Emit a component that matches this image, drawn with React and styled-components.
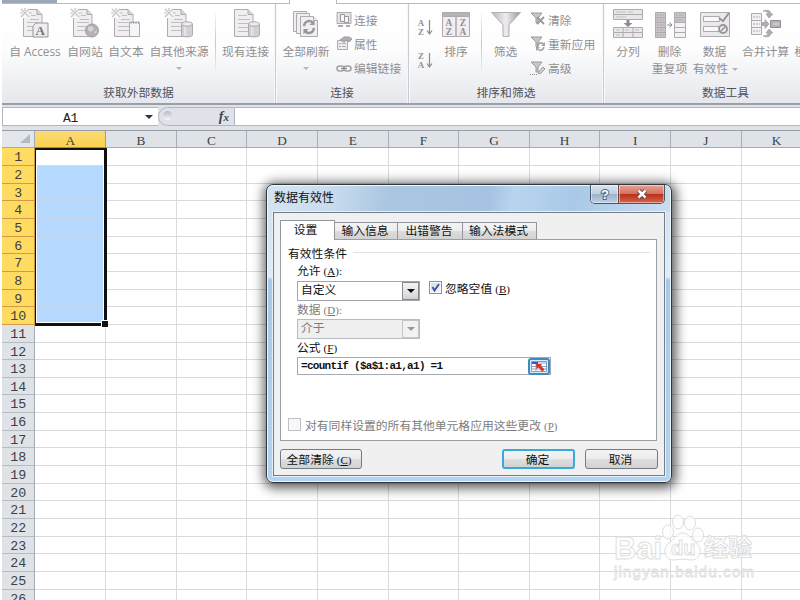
import React from 'react';
import styled, { createGlobalStyle, css } from 'styled-components';

const GlobalStyle = createGlobalStyle`
  * {
    box-sizing: border-box;
  }
  body {
    margin: 0;
    overflow: hidden;
    background: #fff;
    font-family: 'Noto Sans CJK SC', sans-serif;
    font-size: 11.8px;
  }
  svg {
    display: block;
    flex: none;
    overflow: visible;
  }
`;

const Window = styled.div`
  position: relative;
  width: 800px;
  height: 600px;
  padding-left: 2px;
  overflow: hidden;
  display: flex;
  flex-direction: column;
`;

/* ribbon */

const TabStrip = styled.div`
  display: flex;
  flex: none;
  height: 4px;
`;

const TabEdge = styled.div`
  width: ${({ width }) => (width ? `${width}px` : 'auto')};
  flex: ${({ width }) => (width ? 'none' : 1)};
  background: ${({ file }) => (file ? '#9ca7b9' : '#fff')};
  border-bottom: ${({ active }) => (active ? 'none' : '1px solid #b5bac6')};
  border-right: ${({ edge }) => (edge ? '1px solid #b5bac6' : 'none')};
`;

const Ribbon = styled.div`
  display: flex;
  flex: none;
  height: 101px;
  background: linear-gradient(#fff 0%, #fdfdfe 45%, #e9ebef 90%, #e4e7ec 100%);
  border-bottom: 2px solid #999fa9;
`;

const Group = styled.div`
  width: ${({ width }) => width}px;
  flex: none;
  display: flex;
  flex-direction: column;
  border-right: 1px solid #c9ccd4;
  box-shadow: inset -1px 0 #f6f7f9, 1px 0 #fafafb;
`;

const Tools = styled.div`
  display: flex;
  height: 78px;
  padding-left: ${({ left }) => left || 0}px;
`;

const GroupName = styled.div`
  line-height: 20px;
  text-align: center;
  color: #50525b;
`;

const BigButton = styled.div`
  width: ${({ width }) => width}px;
  flex: none;
  display: flex;
  flex-direction: column;
  align-items: center;
  padding-top: 4px;
  color: #8f8f92;
  white-space: nowrap;
  line-height: 17px;
  font-family: 'Open Sans', 'Noto Sans CJK SC', sans-serif;
  svg {
    margin-bottom: 5px;
  }
`;

const Arrow = styled.i`
  display: inline-block;
  border: ${({ size }) => size || 3}px solid transparent;
  border-top-color: ${({ color }) => color || '#b5b5b9'};
  border-bottom: 0;
  margin: ${({ margin }) => margin || 0};
`;

const Divider = styled.div`
  width: 1px;
  height: 58px;
  margin: 10px ${({ right }) => right}px 0 ${({ left }) => left}px;
  background: linear-gradient(#f4f4f6, #c5c8cf 50%, #eceef1);
`;

const SmallColumn = styled.div`
  display: flex;
  flex-direction: column;
  padding-top: 3px;
  margin-left: ${({ left }) => left || 0}px;
`;

const SmallButton = styled.div`
  display: flex;
  align-items: center;
  gap: 2px;
  height: 24.3px;
  color: #8f8f92;
  white-space: nowrap;
`;

const SortColumn = styled.div`
  width: 21px;
  display: flex;
  flex-direction: column;
  gap: 16px;
  padding-top: 15px;
`;

/* formula bar */

const FormulaBar = styled.div`
  display: flex;
  flex: none;
  height: 25px;
  padding: 2px 0 4px;
  background: #dfe3e9;
`;

const NameBox = styled.div`
  width: 156px;
  display: flex;
  align-items: center;
  padding: 3px 0 0 60px;
  border: 1px solid #b2b6bf;
  border-width: 1px 0 1px 1px;
  background: #fff;
  font: 13px 'Liberation Mono', monospace;
  letter-spacing: -0.4px;
  color: #222;
`;

const FunctionBox = styled.div`
  width: 77px;
  display: flex;
  justify-content: space-between;
  align-items: center;
  padding: 0 5px 0 4px;
  background: #dfe3e9;
  border: 1px solid #b2b6bf;
  border-radius: 10px 0 0 10px;
  font: italic bold 14px/17px 'Liberation Serif', serif;
  color: #444;
  small {
    font-size: 11px;
  }
`;

const Knob = styled.div`
  width: 9px;
  height: 9px;
  margin-bottom: 2px;
  border-radius: 50%;
  background: linear-gradient(#b7bac1, #f5f6f8);
`;

const FormulaInput = styled.div`
  flex: 1;
  background: #fff;
  border: 1px solid #b2b6bf;
  border-width: 1px 0;
`;

/* sheet */

const HeaderRow = styled.div`
  display: flex;
  flex: none;
  height: 18.3px;
  margin-right: -20px;
  border-top: 1px solid #989da6;
`;

const headerFont = css`
  font-family: 'Liberation Mono', monospace;
  font-size: 13.3px;
  color: #3c3f45;
`;

const Corner = styled.div`
  width: 33.4px;
  flex: none;
  display: flex;
  justify-content: flex-end;
  align-items: flex-end;
  padding: 0 4px 4px 0;
  background: #e3e6eb;
  border-right: 1px solid #a5aab3;
  border-bottom: 1px solid #a5aab3;
`;

const ColumnHeader = styled.div`
  ${headerFont}
  font-family: 'Liberation Serif', serif;
  width: 70.63px;
  flex: none;
  line-height: 20px;
  text-align: center;
  background: ${({ selected }) => (selected ? 'linear-gradient(#fbdc78, #fbd04b)' : '#dfe3e8')};
  border-right: 1px solid ${({ selected }) => (selected ? '#c9983c' : '#a9adb5')};
  border-bottom: 1px solid ${({ selected }) => (selected ? '#b38b2d' : '#a5aab3')};
`;

const Row = styled.div`
  display: flex;
  flex: none;
  height: 17.66px;
  margin-right: -20px;
`;

const RowHeader = styled.div`
  ${headerFont}
  width: 33.4px;
  flex: none;
  line-height: 20px;
  text-align: center;
  background: ${({ selected }) => (selected ? '#ffdc61' : '#dfe3e8')};
  border-right: 1px solid ${({ selected }) => (selected ? '#c9983c' : '#a5aab3')};
  border-bottom: 1px solid ${({ selected }) => (selected ? '#d39b45' : '#b6bac1')};
`;

const Cell = styled.div`
  width: 70.63px;
  flex: none;
  background: ${({ selected }) => (selected ? '#b5d9ff' : '#fff')};
  border-right: 1px solid #d9dadd;
  border-bottom: 1px solid ${({ selected }) => (selected ? '#c4d4e6' : '#d9dadd')};
`;

const Selection = styled.div`
  position: absolute;
  left: 35px;
  top: 148px;
  width: 72px;
  height: 178px;
  border: 2px solid #111;
  border-width: 2px 3px 3px 1px;
  box-shadow: inset 0 0 0 1px #fff;
  &::after {
    content: '';
    position: absolute;
    right: -4px;
    bottom: -4px;
    width: 6px;
    height: 6px;
    background: #111;
    border: 1px solid #fff;
    border-width: 1px 0 0 1px;
  }
`;

const Watermark = styled.svg`
  position: absolute;
  left: 608px;
  top: 510px;
  fill: #fff;
  fill-opacity: 0.75;
  stroke: #dedede;
`;

/* dialog */

const Dialog = styled.div`
  position: absolute;
  left: 266px;
  top: 184px;
  width: 406px;
  height: 299px;
  display: flex;
  flex-direction: column;
  padding: 0 6px 6px;
  border: 1px solid #32373d;
  border-radius: 7px;
  background: linear-gradient(
    #b5cfe9 0,
    #d3e3f3 28px,
    #dfebf7 92px,
    #a6c8e9 95px,
    #b4d3f1 100%
  );
  box-shadow: inset 0 0 0 1px #eef6fd, 1px 2px 12px 3px rgba(0, 0, 0, 0.65);
  font-family: 'Liberation Serif', 'Noto Sans CJK SC', serif;
  color: #111;
`;

const TitleBar = styled.div`
  display: flex;
  flex: none;
  justify-content: space-between;
  height: 27px;
  margin: 0 -5px;
  padding: 0 5px 0 6px;
  border-radius: 6px 6px 0 0;
  background: linear-gradient(
    100deg,
    #d5e4f2 0%,
    #c9dced 16%,
    #abc6e1 30%,
    #a5c3e1 55%,
    #b9d4ef 61%,
    #a9c9e7 76%,
    #c9ddef 100%
  );
  border-top: 1px solid #f0f7fd;
`;

const Title = styled.div`
  line-height: 24px;
  font-size: 12px;
  color: #111;
`;

const Controls = styled.div`
  display: flex;
  width: 75px;
  height: 19px;
  margin-top: -1px;
  border: 1px solid #4a5665;
  border-top: 0;
  border-radius: 0 0 5px 5px;
  overflow: hidden;
`;

const Control = styled.div`
  width: ${({ close }) => (close ? 46 : 27)}px;
  display: flex;
  align-items: center;
  justify-content: center;
  border-left: ${({ close }) => (close ? '1px solid #6b4447' : 'none')};
  background: ${({ close }) =>
    close
      ? 'linear-gradient(#e6a496 0, #d4705e 48%, #b9301b 52%, #d4674e 100%)'
      : 'linear-gradient(#d9e4ef 0, #bfd0e2 48%, #9db2ca 52%, #bdd2e8 100%)'};
  box-shadow: inset 0 0 0 1px rgba(255, 255, 255, 0.45);
`;

const Client = styled.div`
  flex: 1;
  display: flex;
  flex-direction: column;
  padding: 7px 7px 0 6px;
  border: 1px solid #717d8a;
  outline: 1px solid #e4f0fb;
  background: #f0f0f0;
`;

const Tabs = styled.div`
  display: flex;
  align-items: flex-end;
  height: 19px;
`;

const Tab = styled.div`
  width: ${({ width }) => width}px;
  height: ${({ active }) => (active ? 20 : 17)}px;
  margin-bottom: ${({ active }) => (active ? -1 : 0)}px;
  padding-right: ${({ active }) => (active ? 4 : 2)}px;
  line-height: ${({ active }) => (active ? 19 : 17)}px;
  text-align: center;
  border: 1px solid #93969c;
  border-bottom: 0;
  border-left-width: ${({ active }) => (active ? 1 : 0)}px;
  background: ${({ active }) =>
    active ? '#fff' : 'linear-gradient(#f4f4f4 0, #ececec 50%, #dcdcdc 52%, #d2d2d2 100%)'};
  z-index: 1;
  white-space: nowrap;
`;

const Panel = styled.div`
  height: 202px;
  padding: 4px 6px 0 7px;
  background: #fff;
  border: 1px solid #9a9ea6;
`;

const Legend = styled.div`
  display: flex;
  align-items: center;
  gap: 6px;
  height: 17px;
  margin-bottom: 1px;
  &::after {
    content: '';
    flex: 1;
    border-top: 1px solid #dbe3ea;
  }
`;

const Label = styled.div`
  height: ${({ height }) => height || 18}px;
  line-height: 18px;
  padding-left: 9px;
  color: ${({ disabled }) => (disabled ? '#7c7c7c' : '#111')};
`;

/* access key after a caption, e.g. (A) */
const Key = styled.span`
  margin-left: 3px;
  font-size: 11px;
`;

const FieldLine = styled.div`
  display: flex;
  align-items: center;
  height: 20px;
  padding-left: 9px;
`;

const Combo = styled.div`
  display: flex;
  justify-content: space-between;
  align-items: center;
  width: 123px;
  height: 20px;
  padding-left: 3px;
  line-height: 16px;
  border: 1px solid ${({ disabled }) => (disabled ? '#b9bbc0' : '#a2a6ae')};
  background: ${({ disabled }) => (disabled ? '#efefef' : '#fff')};
  color: ${({ disabled }) => (disabled ? '#7c7c7c' : '#111')};
`;

const ComboText = styled.span`
  margin-bottom: 2px;
`;

const ComboButton = styled.div`
  display: flex;
  align-items: center;
  justify-content: center;
  width: 17px;
  height: 18px;
  border: 1px solid ${({ disabled }) => (disabled ? '#c3c5c9' : '#85888e')};
  background: ${({ disabled }) =>
    disabled ? '#f2f2f2' : 'linear-gradient(#f4f4f4, #e6e6e6 50%, #d2d2d2)'};
`;

const Check = styled.div`
  display: flex;
  align-items: center;
  gap: ${({ gap }) => gap || 4}px;
  height: 17px;
  margin-top: ${({ top }) => top || 0}px;
  margin-left: ${({ left }) => left || 0}px;
  color: ${({ disabled }) => (disabled ? '#7c7c7c' : '#111')};
  white-space: nowrap;
`;

const Box = styled.div`
  width: 13px;
  height: 13px;
  border: 1px solid ${({ disabled }) => (disabled ? '#bdbfc3' : '#8d9299')};
  background: ${({ disabled }) =>
    disabled ? '#f7f7f7' : 'linear-gradient(135deg, #cfd8e2, #f5f8fb)'};
  box-shadow: inset 0 0 0 1px #fafafa;
`;

const FormulaField = styled.div`
  display: flex;
  align-items: center;
  width: 254px;
  height: 18px;
  margin-top: -2px;
  padding-left: 3px;
  border: 1px solid #a5a9b1;
  font-family: 'Liberation Mono', 'Noto Sans CJK SC', monospace;
  font-size: 11px;
  font-weight: bold;
  letter-spacing: -0.7px;
  white-space: pre;
`;

const Wide = styled.span`
  width: 11.7px;
  text-align: ${({ align }) => align};
`;

const RefButton = styled.div`
  display: flex;
  align-items: center;
  justify-content: center;
  width: 22px;
  height: 17px;
  margin-left: auto;
  border: 2px solid #4189bd;
  border-radius: 3px;
  background: #dfebf4;
`;

const Footer = styled.div`
  display: flex;
  gap: 10px;
  padding-top: 8px;
  margin-right: -1px;
`;

const Button = styled.div`
  width: ${({ width }) => width}px;
  height: 20px;
  line-height: ${({ primary }) => (primary ? 18 : 20)}px;
  padding-right: 2px;
  text-align: center;
  border: ${({ primary }) => (primary ? '2px solid #39a9d9' : '1px solid #777a80')};
  border-radius: 3px;
  background: linear-gradient(#f3f3f3 0, #ececec 48%, #dedede 52%, #d2d2d2 100%);
  &:first-child {
    margin-right: auto;
    padding-right: 4px;
  }
`;

const ink = '#aeaaaf';
const pale = '#f0eef1';

const Page = ({ star = true }) => (
  <g stroke={ink} fill="none">
    <path d="M3.5 1.5H17l5 5V28.5H3.5z" fill={pale} />
    <path d="M17 1.5v5h5" fill="#d8d5da" />
    <path
      d={star ? 'M11 7.5h5M10 11.5h9M7 14.5h12M7 18.5h12M7 22.5h12' : 'M7 7.5h9M7 11.5h12M7 15.5h12M7 19.5h12M7 23.5h12'}
      stroke="#c2bec4"
    />
    {star && (
      <>
        <path d="M0 0h9v10H0z" fill="#fbfafb" stroke="none" />
        <path d="M1 1l8 8M1 9l8-8M5 0v3M0 5h3M8 5h4" stroke="#c7c3c8" strokeWidth="1.2" />
      </>
    )}
  </g>
);

const Cylinder = () => (
  <g fill="#d3d0d5" stroke={ink}>
    <path d="M17.5 16v11c0 2.5 11 2.5 11 0V16" />
    <ellipse cx="23" cy="16" rx="5.5" ry="2.2" fill="#eeecef" />
    <path d="M20.5 19v9M22 19v9" stroke="#e9e7ea" />
  </g>
);

const Icon = ({ children, width = 30, height = 30, ...rest }) => (
  <svg width={width} height={height} viewBox={`0 0 ${width} ${height}`} fill="none" {...rest}>
    {children}
  </svg>
);

const AccessIcon = () => (
  <Icon>
    <Page />
    <path d="M16 15h12v14H13V18z" fill="#eeecef" stroke="#99949a" />
    <text x="15.5" y="27" fontSize="13" fontWeight="bold" fontFamily="Liberation Serif" fill="#777379">
      A
    </text>
  </Icon>
);

const WebIcon = () => (
  <Icon>
    <Page />
    <circle cx="22" cy="22.5" r="6.5" fill="#b5b1b7" stroke="#a19da3" />
    <path d="M18 19l4-1 2 3-3 3-3-2zM24 24l3-2-1 4z" fill="#d6d3d8" />
  </Icon>
);

const TextIcon = () => (
  <Icon>
    <Page />
    <path d="M18.5 14.5h10v14h-10z" fill="#f6f5f7" stroke={ink} />
    <path d="M20 13v3M22.5 13v3M25 13v3M27.5 13v3" stroke={ink} />
  </Icon>
);

const SourceIcon = () => (
  <Icon>
    <Page />
    <Cylinder />
  </Icon>
);

const ConnectionIcon = () => (
  <Icon>
    <Page star={false} />
    <Cylinder />
  </Icon>
);

const RefreshIcon = () => (
  <Icon>
    <g stroke={ink} fill={pale}>
      <path d="M2.5 3.5h13v20h-13z" />
      <path d="M5.5 5.5h13v20h-13z" />
      <path d="M9.5 8.5h13l4 4v16h-17z" />
      <path d="M22.5 8.5v4h4" />
    </g>
    <path d="M13 18c1-6 7-6 9-3M23 20c-1 6-7 6-9 3" stroke="#9a959c" strokeWidth="2.4" />
    <path d="M23.5 12v5h-5zM12.5 26v-5h5z" fill="#9a959c" />
  </Icon>
);

const LinkPageIcon = () => (
  <Icon width={16} height={16}>
    <path d="M1 1.5h14v11H1z" fill="#e3e1e5" stroke={ink} />
    <path d="M4.5 3.5h4v7h-4zM8.5 5.5h4v6h-4z" fill="#f7f6f8" stroke="#99959b" />
    <path d="M2 15h5M10 15h4" stroke={ink} strokeWidth="2" />
  </Icon>
);

const PropertyIcon = () => (
  <Icon width={16} height={16}>
    <path d="M1.5 5.5h10v9h-10z" fill="#eeecef" stroke={ink} />
    <path d="M3 8.5h2M6 8.5h4M3 11.5h2M6 11.5h4" stroke={ink} />
    <path d="M4 5l4-3h5l3 2-3 3-2-2-3 2z" fill="#b3afb5" stroke="#9c989e" />
  </Icon>
);

const ChainIcon = () => (
  <Icon width={16} height={16}>
    <rect x="1" y="6" width="7" height="5" rx="2.5" stroke="#a5a1a7" strokeWidth="1.6" />
    <rect x="8" y="6" width="7" height="5" rx="2.5" stroke="#a5a1a7" strokeWidth="1.6" />
    <path d="M5 8.5h6" stroke="#8d898f" strokeWidth="1.3" />
  </Icon>
);

const SortLetters = ({ x, first, second, size = 9.5, gap = 9 }) => (
  <g fontFamily="Liberation Serif" fontSize={size} fontWeight="bold" fill="#928e94" textAnchor="middle">
    <text x={x} y="7">
      {first}
    </text>
    <text x={x} y={7 + gap}>
      {second}
    </text>
  </g>
);

const SortIcon = ({ first, second }) => (
  <Icon width={16} height={17}>
    <SortLetters x={4} first={first} second={second} size={8.8} />
    <path d="M12.5 1v14M10 11.5l2.5 3.5 2.5-3.5" stroke="#8d898f" strokeWidth="1.2" />
  </Icon>
);

const SortDialogIcon = () => (
  <Icon>
    <path d="M1.5 4.5h27v24h-27z" fill={pale} stroke={ink} />
    <path d="M1.5 4.5h27v4h-27z" fill="#b7b3b9" stroke={ink} />
    <path d="M15 9v19" stroke={ink} strokeWidth="1.5" />
    <g transform="translate(0 10.5)">
      <SortLetters x={8} first="A" second="Z" size={9.4} gap={9.5} />
      <SortLetters x={22} first="Z" second="A" size={9.4} gap={9.5} />
    </g>
  </Icon>
);

const FilterIcon = () => (
  <Icon>
    <defs>
      <linearGradient id="funnel">
        <stop offset="0" stopColor="#b9b5bb" />
        <stop offset="0.5" stopColor="#efedf0" />
        <stop offset="1" stopColor="#989399" />
      </linearGradient>
    </defs>
    <path d="M.5 4.5h29L18 17v11.500h-6V17z" fill="url(#funnel)" stroke="#b4b0b5" />
  </Icon>
);

const Funnel = () => <path d="M1 2h11L8 7v5H6V7z" fill="#c9c5cb" stroke="#9c989e" />;

const ClearIcon = () => (
  <Icon width={16} height={16}>
    <Funnel />
    <path d="M7 6l7 7M14 6l-7 7" stroke="#9c989e" strokeWidth="1.8" />
  </Icon>
);

const ReapplyIcon = () => (
  <Icon width={16} height={16}>
    <Funnel />
    <path d="M8 11c0-4 5-4 6-1M14 12c-1 4-5 4-6 2" stroke="#a5a1a7" strokeWidth="1.6" />
    <path d="M15 7v4h-4zM6 16v-4h4z" fill="#a5a1a7" />
  </Icon>
);

const AdvancedIcon = () => (
  <Icon width={16} height={16}>
    <Funnel />
    <path d="M8 13l5-6 2 2-5 5z" fill="#d5d2d7" stroke="#9c989e" />
    <path d="M0 14.5h8" stroke="#8f8b91" strokeDasharray="1 1" />
  </Icon>
);

const SplitIcon = () => (
  <Icon>
    <g stroke={ink} fill="#e9e7ea">
      <path d="M.5 1.5h29v10H.5z" />
      <path d="M.5 6.5h29" />
      <path d="M.5 19.5h29v10H.5zM.5 24.5h29M10 19.5v10M20 19.5v10" />
    </g>
    <path d="M3 4h10M15 4h5M3 9h10M3 22h4M12 22h4M22 22h4M3 27h4" stroke="#c2bec4" />
    <path d="M13.5 12h3v3h3l-4.5 4-4.5-4h3z" fill="#8e8990" />
  </Icon>
);

const DuplicatesIcon = () => (
  <Icon width={32}>
    <g stroke={ink} fill="#c8c4ca">
      <path d="M1.5 4.5h10v25h-10z" />
      <path d="M20.5 4.5h11v25h-11z" fill="#f3f2f4" />
      <path d="M20.5 4.5h11v10h-11z" />
      <path d="M1.5 9.5h10M1.5 14.5h10M1.5 19.5h10M1.5 24.5h10M20.5 9.5h11M20.5 19.5h11M20.5 24.5h11" />
    </g>
    <path d="M3 7h7M3 12h7M3 17h7M3 22h7M3 27h7M22 7h7M22 12h7" stroke="#a8a4aa" strokeDasharray="2 1" />
    <path d="M13 17h5M15.5 14.5L18 17l-2.5 2.5" stroke="#8e8990" />
  </Icon>
);

const ValidationIcon = () => (
  <Icon>
    <path d="M.5 4.5h29v24H.5z" fill="#ebe9ec" stroke={ink} />
    <path d="M3.5 8.5h16v5h-16zM3.5 18.5h16v5h-16z" fill="#f9f8fa" stroke={ink} />
    <path d="M19 10l4 3 6-8" stroke="#99949b" strokeWidth="2" />
    <circle cx="23" cy="21" r="4" stroke="#99949b" strokeWidth="1.8" />
    <path d="M20 24l6-6" stroke="#99949b" strokeWidth="1.6" />
  </Icon>
);

const ConsolidateIcon = () => (
  <Icon>
    <path d="M.5 5.5h10v21H.5zM.5 12.5h10M.5 19.5h10" fill="#f2f0f3" stroke={ink} />
    <path d="M2 9h7M2 16h7M2 23h7" stroke="#aaa6ac" strokeDasharray="2 1" />
    <path d="M19.5 12.5h10v7h-10z" fill="#b7b3b9" stroke="#918d93" />
    <path d="M22 16h6" stroke="#e2e0e4" />
    <path
      d="M11 14.5h3v-3l4 4.5-4 4.5v-3h-3zM12 3c5-2 8 0 8 3h2l-4 4-3-4h2c0-2-2-3-5-3zM12 28c5 2 8 0 8-3h2l-4-4-3 4h2c0 2-2 3-5 3z"
      fill="#b0acb2"
      stroke="#a19da3"
      strokeWidth=".7"
    />
  </Icon>
);

const RangeIcon = () => (
  <Icon width={16} height={11}>
    <path d="M.5.5h15v10H.5z" fill="#fff" stroke="#7a9cd1" />
    <path d="M1 1h6v2H1z" fill="#2f5ec4" />
    <path d="M7 2h8M0 5.5h15M0 8h15M5 3v8M10 3v8" stroke="#86a3d0" />
    <path d="M5 3h6L9.5 4.5l4 4-2 2-4-4L5.5 8z" fill="#d23420" />
  </Icon>
);

const columns = ['A', 'B', 'C', 'D', 'E', 'F', 'G', 'H', 'I', 'J', 'K'];
const rows = Array.from({ length: 26 }, (_, i) => i + 1);

const RibbonBar = () => (
  <>
    <TabStrip>
      <TabEdge width={55} file />
      <TabEdge width={233} edge />
      <TabEdge width={47} active edge />
      <TabEdge />
    </TabStrip>
    <Ribbon>
      <Group width={274}>
        <Tools left={3}>
          <BigButton width={60}>
            <AccessIcon />自 Access
          </BigButton>
          <BigButton width={40}>
            <WebIcon />
            自网站
          </BigButton>
          <BigButton width={42}>
            <TextIcon />
            自文本
          </BigButton>
          <BigButton width={64}>
            <SourceIcon />
            自其他来源
            <Arrow margin="7px 0 0" />
          </BigButton>
          <Divider left={4} right={2} />
          <BigButton width={55}>
            <ConnectionIcon />
            现有连接
          </BigButton>
        </Tools>
        <GroupName>获取外部数据</GroupName>
      </Group>
      <Group width={133}>
        <Tools>
          <BigButton width={60}>
            <RefreshIcon />
            全部刷新
            <Arrow margin="7px 0 0" />
          </BigButton>
          <SmallColumn>
            <SmallButton>
              <LinkPageIcon />
              连接
            </SmallButton>
            <SmallButton>
              <PropertyIcon />
              属性
            </SmallButton>
            <SmallButton>
              <ChainIcon />
              编辑链接
            </SmallButton>
          </SmallColumn>
        </Tools>
        <GroupName>连接</GroupName>
      </Group>
      <Group width={195}>
        <Tools left={8}>
          <SortColumn>
            <SortIcon first="A" second="Z" />
            <SortIcon first="Z" second="A" />
          </SortColumn>
          <BigButton width={36}>
            <SortDialogIcon />
            排序
          </BigButton>
          <Divider left={7} right={5} />
          <BigButton width={37}>
            <FilterIcon />
            筛选
          </BigButton>
          <SmallColumn left={6}>
            <SmallButton>
              <ClearIcon />
              清除
            </SmallButton>
            <SmallButton>
              <ReapplyIcon />
              重新应用
            </SmallButton>
            <SmallButton>
              <AdvancedIcon />
              高级
            </SmallButton>
          </SmallColumn>
        </Tools>
        <GroupName>排序和筛选</GroupName>
      </Group>
      <Group width={244}>
        <Tools left={4}>
          <BigButton width={40}>
            <SplitIcon />
            分列
          </BigButton>
          <BigButton width={43}>
            <DuplicatesIcon />
            <span>删除</span>
            <span>重复项</span>
          </BigButton>
          <BigButton width={47}>
            <ValidationIcon />
            <span>数据</span>
            <span>
              有效性
              <Arrow margin="0 -2px 2px 4px" />
            </span>
          </BigButton>
          <BigButton width={55}>
            <ConsolidateIcon />
            合并计算
          </BigButton>
          <BigButton width={50}>
            <Icon />
            模拟分析
          </BigButton>
        </Tools>
        <GroupName>数据工具</GroupName>
      </Group>
    </Ribbon>
  </>
);

const Sheet = () => (
  <>
    <HeaderRow>
      <Corner>
        <Icon width={10} height={9}>
          <path d="M10 0v9H0z" fill="#b5b9c0" />
        </Icon>
      </Corner>
      {columns.map((name) => (
        <ColumnHeader key={name} selected={name === 'A'}>
          {name}
        </ColumnHeader>
      ))}
    </HeaderRow>
    {rows.map((row) => (
      <Row key={row}>
        <RowHeader selected={row <= 10}>{row}</RowHeader>
        {columns.map((name) => (
          <Cell key={name} selected={name === 'A' && row > 1 && row <= 10} />
        ))}
      </Row>
    ))}
    <Selection />
  </>
);

const ValidationDialog = () => (
  <Dialog>
    <TitleBar>
      <Title>数据有效性</Title>
      <Controls>
        <Control>
          <Icon width={12} height={14}>
            <text
              x="2"
              y="12"
              fontFamily="Liberation Sans"
              fontWeight="bold"
              fontSize="13"
              fill="#fff"
              stroke="#5a6675"
              strokeWidth="2"
              paintOrder="stroke"
            >
              ?
            </text>
          </Icon>
        </Control>
        <Control close>
          <Icon width={12} height={10}>
            <path d="M2.5 1.5l7 7M9.5 1.5l-7 7" stroke="#584048" strokeWidth="4.5" />
            <path d="M2.5 1.5l7 7M9.5 1.5l-7 7" stroke="#fff" strokeWidth="2.5" />
          </Icon>
        </Control>
      </Controls>
    </TitleBar>
    <Client>
      <Tabs>
        <Tab width={55} active>
          设置
        </Tab>
        <Tab width={63}>输入信息</Tab>
        <Tab width={65}>出错警告</Tab>
        <Tab width={74}>输入法模式</Tab>
      </Tabs>
      <Panel>
        <Legend>有效性条件</Legend>
        <Label height={19}>
          允许
          <Key>
            (<u>A</u>):
          </Key>
        </Label>
        <FieldLine>
          <Combo>
            <ComboText>自定义</ComboText>
            <ComboButton>
              <Arrow color="#111" size={4} />
            </ComboButton>
          </Combo>
          <Check left={9} top={-7} gap={3}>
            <Box>
              <Icon width={11} height={11}>
                <path d="M2.5 5l2 3.5L9 2" stroke="#3b4f9e" strokeWidth="1.8" />
              </Icon>
            </Box>
            <span>
              忽略空值
              <Key>
                (<u>B</u>)
              </Key>
            </span>
          </Check>
        </FieldLine>
        <Label disabled>
          数据
          <Key>
            (<u>D</u>):
          </Key>
        </Label>
        <FieldLine>
          <Combo disabled>
            <ComboText>介于</ComboText>
            <ComboButton disabled>
              <Arrow color="#999" size={4} />
            </ComboButton>
          </Combo>
        </FieldLine>
        <Label>
          公式
          <Key>
            (<u>F</u>)
          </Key>
        </Label>
        <FieldLine>
          <FormulaField>
            =countif<Wide align="right">(</Wide>$a$1:a1,a1<Wide align="left">)</Wide>=1
            <RefButton>
              <RangeIcon />
            </RefButton>
          </FormulaField>
        </FieldLine>
        <Check disabled top={39}>
          <Box disabled />
          <span>
            对有同样设置的所有其他单元格应用这些更改
            <Key>
              (<u>P</u>)
            </Key>
          </span>
        </Check>
      </Panel>
      <Footer>
        <Button width={82}>
          全部清除
          <Key>
            (<u>C</u>)
          </Key>
        </Button>
        <Button width={73} primary>
          确定
        </Button>
        <Button width={73}>取消</Button>
      </Footer>
    </Client>
  </Dialog>
);

const App = () => (
  <Window>
    <GlobalStyle />
    <RibbonBar />
    <FormulaBar>
      <NameBox>
        A1
        <Arrow color="#333" size={4} margin="0 0 3px 67px" />
      </NameBox>
      <FunctionBox>
        <Knob />
        <span>
          f<small>x</small>
        </span>
      </FunctionBox>
      <FormulaInput />
    </FormulaBar>
    <Sheet />
    <Watermark width="160" height="80" fontFamily="Liberation Sans" fontWeight="bold">
      <text x="6" y="49" fontSize="32" textLength="48" lengthAdjust="spacingAndGlyphs">
        Bai
      </text>
      <ellipse cx="60" cy="22" rx="5.5" ry="7" />
      <ellipse cx="70" cy="12" rx="5.5" ry="7" />
      <ellipse cx="82" cy="13" rx="5.5" ry="7" />
      <ellipse cx="90" cy="25" rx="5.5" ry="7" />
      <path d="M74 23c7-1 9 7 14 10 8 6 4 17-5 17-7-1-11-1-17 0-9 1-12-11-6-16 6-4 8-10 14-11z" />
      <text x="63" y="45" fontSize="20">
        du
      </text>
      <text x="96" y="46" fontSize="24" fontFamily="Noto Sans CJK SC">
        经验
      </text>
      <text x="6" y="67" fontSize="15" fontWeight="normal" strokeWidth="0.8" textLength="140">
        jingyan.baidu.com
      </text>
    </Watermark>
    <ValidationDialog />
  </Window>
);

export default App;
